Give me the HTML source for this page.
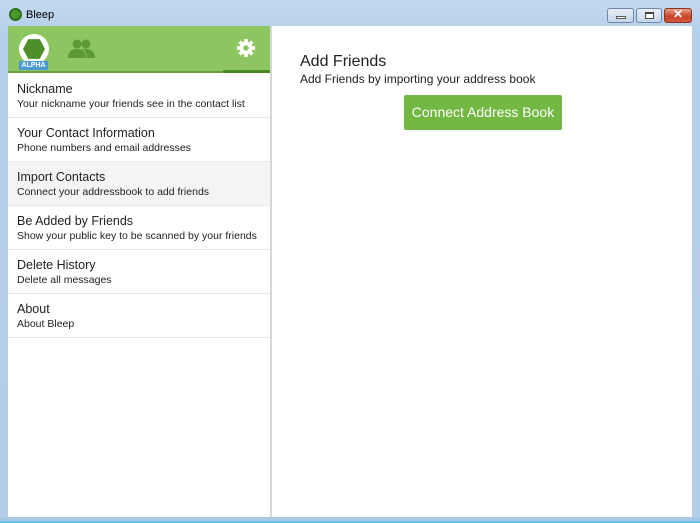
<!DOCTYPE html>
<html><head><style>
*{margin:0;padding:0;box-sizing:border-box}
body{width:700px;height:523px;overflow:hidden;background:#b9d1ea;font-family:"Liberation Sans",sans-serif;position:relative}
.frame{position:absolute;left:0;top:0;width:700px;height:523px;background:linear-gradient(#c4d9ef,#b7d0ea 30px,#b4cde8);}
.title{position:absolute;left:26px;top:9px;font-size:11px;color:#000}
.logo{position:absolute;left:9px;top:8px;width:13px;height:13px;border-radius:50%;background:#4a9a2a;border:2px solid #2f6d18}
.btn{position:absolute;top:8px;height:15px;border:1px solid #6d87a8;border-radius:3px;background:linear-gradient(#e6eef8,#c5d6ea)}
.content{position:absolute;left:8px;top:26px;width:684px;height:491px;background:#fff}
.side{position:absolute;left:0;top:0;width:262px;height:491px;background:#fff}
.div{position:absolute;left:262px;top:0;width:2px;height:491px;background:#d6d6d6}
.hdr{position:absolute;left:0;top:0;width:262px;height:47px;background:#8dc661}
.hdr .line{position:absolute;left:0;bottom:0;width:262px;height:2px;background:#6aa03f}
.hdr .sel{position:absolute;left:215px;bottom:0;width:47px;height:3px;background:#4a8a22}
.item{position:absolute;left:0;width:262px;height:44px;border-bottom:1px solid #e8e8e8;padding:8px 0 0 9px}
.item b{display:block;font-weight:normal;font-size:12.5px;color:#222;line-height:15px}
.item span{display:block;font-size:10.5px;color:#222;line-height:15px}
.bottom{position:absolute;left:0;top:517px;width:700px;height:6px;background:#a9cae4;border-bottom:2px solid #5ec4ea}
</style></head><body>
<div class="frame"></div>
<div class="logo"></div>
<div class="title">Bleep</div>
<div class="btn" style="left:607px;width:27px"><div style="position:absolute;left:8px;top:7px;width:10px;height:3px;background:#fff;border:1px solid #555"></div></div>
<div class="btn" style="left:636px;width:26px"><div style="position:absolute;left:8px;top:3px;width:9px;height:7px;border:1px solid #444;border-top-width:2px;background:#fff"></div></div>
<div class="btn" style="left:664px;width:28px;border-color:#8a3323;background:linear-gradient(#e9a08c,#c9442a 55%,#d2593c)"><div style="position:absolute;left:0;width:26px;top:-2px;text-align:center;color:#fff;font-weight:bold;font-size:12px">✕</div></div>
<div class="content">
 <div class="side">
  <div class="hdr">
   <div style="position:absolute;left:11px;top:8px;width:30px;height:30px;border-radius:50%;background:#fff"></div>
   <svg style="position:absolute;left:14px;top:11px" width="24" height="24" viewBox="0 0 23 23"><polygon points="6,2 17,2 22,11.5 17,21 6,21 1,11.5" fill="#4f8f2a"/></svg>
   <div style="position:absolute;left:11px;top:35px;width:29px;height:9px;background:#4b9bd1;color:#fff;font-size:7px;font-weight:bold;text-align:center;line-height:9px">ALPHA</div>
   <svg style="position:absolute;left:58px;top:13px" width="30" height="20" viewBox="0 0 30 20"><g fill="#5b9a36"><circle cx="11" cy="5" r="4.5"/><path d="M2 19 Q2 10 11 10 Q20 10 20 19Z"/><circle cx="20" cy="5" r="4.5"/><path d="M16 10 Q29 9 29 19 L21 19 Q21 12 16 10Z"/></g></svg>
   <svg style="position:absolute;left:228px;top:12px" width="20" height="20" viewBox="0 0 22 22"><g fill="#fff"><circle cx="11" cy="11" r="7"/><g stroke="#fff" stroke-width="4"><line x1="11" y1="1" x2="11" y2="21"/><line x1="1" y1="11" x2="21" y2="11"/><line x1="4" y1="4" x2="18" y2="18"/><line x1="18" y1="4" x2="4" y2="18"/></g></g><circle cx="11" cy="11" r="3" fill="#8dc661"/></svg>
   <div class="line"></div><div class="sel"></div>
  </div>
  <div class="item" style="top:48px"><b>Nickname</b><span>Your nickname your friends see in the contact list</span></div>
  <div class="item" style="top:92px"><b>Your Contact Information</b><span>Phone numbers and email addresses</span></div>
  <div class="item" style="top:136px;background:#f4f4f4"><b>Import Contacts</b><span>Connect your addressbook to add friends</span></div>
  <div class="item" style="top:180px"><b>Be Added by Friends</b><span>Show your public key to be scanned by your friends</span></div>
  <div class="item" style="top:224px"><b>Delete History</b><span>Delete all messages</span></div>
  <div class="item" style="top:268px"><b>About</b><span>About Bleep</span></div>
 </div>
 <div class="div"></div>
 <div style="position:absolute;left:292px;top:27px;font-size:16px;color:#222">Add Friends</div>
 <div style="position:absolute;left:292px;top:46px;font-size:12px;color:#222">Add Friends by importing your address book</div>
 <div style="position:absolute;left:396px;top:69px;width:158px;height:35px;background:#72b843;border-radius:2px;color:#fff;font-size:14px;text-align:center;line-height:35px">Connect Address Book</div>
</div>
<div class="bottom"></div>
</body></html>
